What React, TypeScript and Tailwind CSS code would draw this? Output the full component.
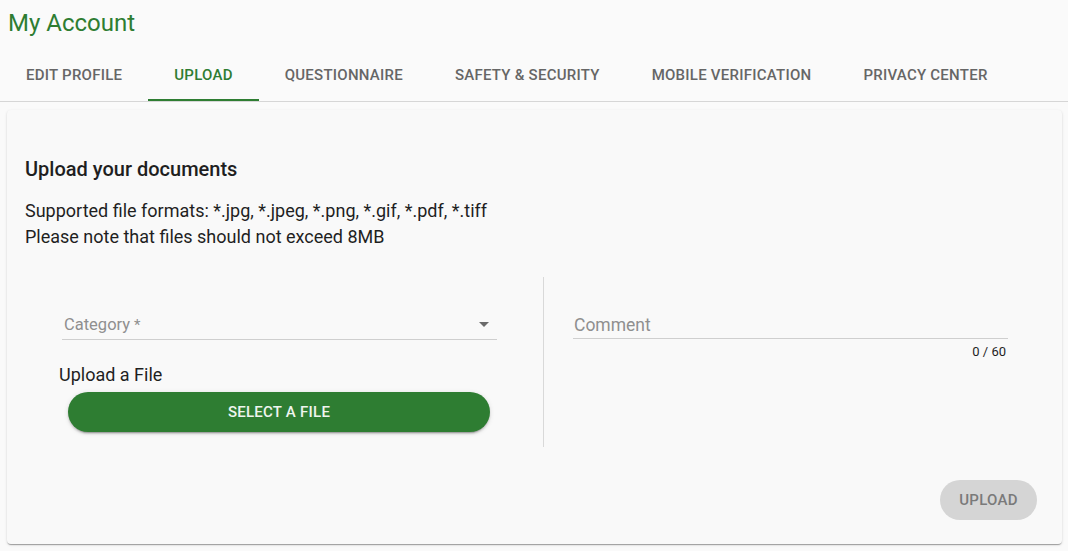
import { useState } from 'react';

const tabs = ['Edit Profile', 'Upload', 'Questionnaire', 'Safety & Security', 'Mobile Verification', 'Privacy Center'];

export default function App() {
  const [active, setActive] = useState(1);
  const [comment, setComment] = useState('');

  return (
    <div className="min-h-screen w-full bg-[#fafafa] font-['Roboto',_'Liberation_Sans',_sans-serif] text-[#222]">
      <h1 className="h-[53px] pt-[7px] pl-[8px] text-[24px] leading-[32px] font-normal text-[#2e7d32]">My Account</h1>

      <div className="flex border-b border-[#d6d6d6]">
        {tabs.map((t, i) => (
          <button
            key={t}
            onClick={() => setActive(i)}
            className={
              i === active
                ? 'relative h-[48px] px-[26px] pb-[4px] text-[15px] leading-[20px] font-medium uppercase tracking-[0.25px] text-[#2e7d32]'
                : 'relative h-[48px] px-[26px] pb-[4px] text-[15px] leading-[20px] font-medium uppercase tracking-[0.25px] text-[#666]'
            }
          >
            {t}
            {i === active && <span className="absolute bottom-0 left-0 right-0 h-[2px] bg-[#2e7d32]" />}
          </button>
        ))}
      </div>

      <div className="ml-[7px] mt-[8px] h-[434px] w-[1055px] rounded-[4px] bg-[#f9f9f9] pt-[47px] pl-[18px] pr-[18px] shadow-[0_2px_1px_-1px_rgba(0,0,0,0.2),0_1px_1px_0_rgba(0,0,0,0.14),0_1px_3px_0_rgba(0,0,0,0.12)]">
        <h2 className="text-[20px] leading-[24px] font-medium text-[#1f1f1f]">Upload your documents</h2>
        <div className="mt-[17px] text-[18px] leading-[26px] text-[#1f1f1f]">
          <p>Supported file formats: *.jpg, *.jpeg, *.png, *.gif, *.pdf, *.tiff</p>
          <p>Please note that files should not exceed 8MB</p>
        </div>

        <div className="mt-[27px] flex">
          <div className="w-[518px] py-[15px]">
            <div className="ml-[37px] flex h-[48px] w-[435px] items-end justify-between border-b border-[#cfcfcf] pb-[6px]">
              <span className="pl-[2px] text-[16.5px] leading-[16px] text-[#8f8f8f]">
                Category<span className="ml-[4px] text-[15px]">*</span>
              </span>
              <svg width="10" height="5" viewBox="0 0 10 5" className="mb-[6px] mr-[8px]">
                <path d="M0 0 L10 0 L5 5 Z" fill="#6b6b6b" />
              </svg>
            </div>
            <div className="ml-[34px] mt-[23px] text-[18px] leading-[24px] text-[#1f1f1f]">Upload a File</div>
            <button className="ml-[43px] mt-[5px] h-[40px] w-[422px] rounded-full bg-[#2e7d32] text-[15px] font-medium uppercase tracking-[0.25px] text-[#eef5ee] shadow-[0_3px_1px_-2px_rgba(0,0,0,0.2),0_2px_2px_0_rgba(0,0,0,0.14),0_1px_5px_0_rgba(0,0,0,0.12)]">
              Select a file
            </button>
          </div>

          <div className="w-px h-[170px] bg-[#d9d9d9]" />

          <div className="py-[15px] pl-[29px]">
            <div className="flex h-[47px] w-[435px] items-end border-b border-[#cfcfcf] pb-[3px]">
              <input
                value={comment}
                maxLength={60}
                onChange={e => setComment(e.target.value)}
                placeholder="Comment"
                className="h-[20px] w-full bg-transparent pl-[1px] text-[17.5px] leading-[20px] text-[#1f1f1f] outline-none placeholder:text-[#8f8f8f]"
              />
            </div>
            <div className="mt-[3px] w-[435px] pr-[2px] text-right text-[13px] leading-[20px] text-[#1f1f1f]">{comment.length} / 60</div>
          </div>
        </div>

        <div className="mt-[33px] flex justify-end pr-[7px]">
          <button disabled className="h-[40px] w-[97px] rounded-full bg-[#d5d5d5] text-[15px] font-medium uppercase tracking-[0.25px] text-[#7a7a7a]">
            Upload
          </button>
        </div>
      </div>
    </div>
  );
}
